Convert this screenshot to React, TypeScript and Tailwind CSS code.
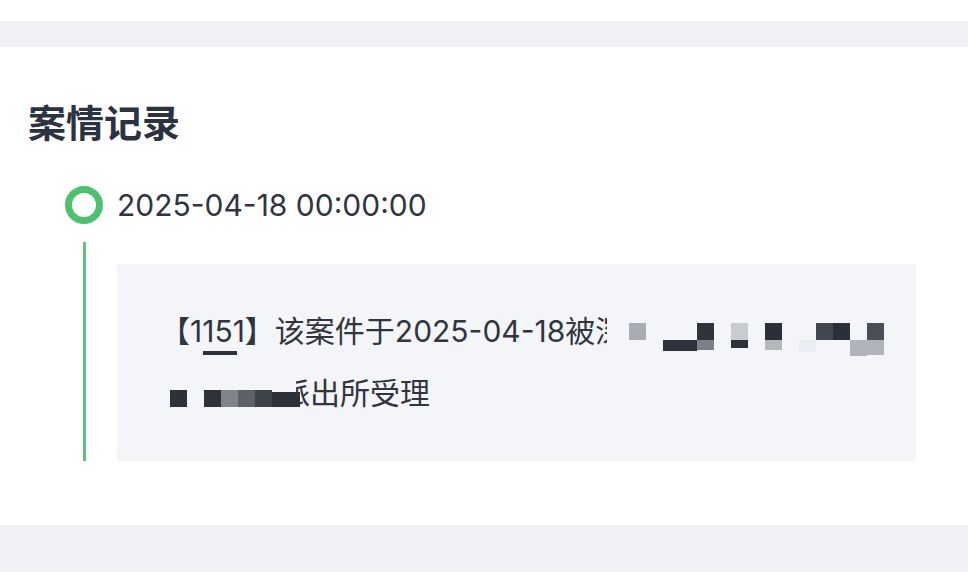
import React from "react";

const FONT = { fontFamily: '"Inter", "Noto Sans CJK SC", "Noto Sans", sans-serif' };

type B = [number, number, number, number, string];
const blocks: B[] = [
  [629, 323, 17, 17, "#a9adb3"],
  [663, 340, 34, 11, "#2d313a"],
  [697, 323, 17, 17, "#2f333c"],
  [697, 340, 17, 10, "#7c8088"],
  [731, 323, 17, 17, "#c8cbcf"],
  [731, 340, 17, 8, "#2e323b"],
  [765, 323, 17, 17, "#2b2f38"],
  [765, 340, 17, 10, "#b4b7bb"],
  [799, 340, 17, 12, "#eaedf3"],
  [816, 323, 17, 17, "#43474f"],
  [833, 323, 17, 17, "#2b2f38"],
  [850, 340, 17, 16, "#b0b3b9"],
  [867, 323, 17, 17, "#4a4e57"],
  [867, 340, 17, 15, "#b0b3b9"],
  [170, 390, 17, 17, "#2d313a"],
  [204, 390, 17, 17, "#2e323b"],
  [221, 390, 17, 17, "#80838a"],
  [238, 390, 17, 17, "#5e6168"],
  [255, 390, 17, 17, "#3e424b"],
  [272, 392, 28, 15, "#2d313a"],
  [203, 351, 34, 4, "#2d313a"],
];

export default function App() {
  return (
    <div className="w-[968px] h-[572px] bg-[#f0f1f4] overflow-hidden" style={FONT}>
      <div className="h-[21px] bg-white" />
      <div className="h-[26px] bg-[#f0f1f4]" />
      <div className="bg-white pt-[56px] pb-[64px]">
        <div className="pl-[28px] text-[38px] leading-[40px] font-semibold text-[#2c3340]">案情记录</div>
        <div className="mt-[43px] flex items-center pl-[65px] h-[38px]">
          <div className="w-[38px] h-[38px] rounded-full border-[7px] border-[#4cc26f]" />
          <div className="ml-[14px] text-[30px] leading-[38px] text-[#303540]">2025-04-18 00:00:00</div>
        </div>
        <div className="mt-[18px] flex">
          <div className="ml-[83px] w-[3px] bg-[#5cc37b]" />
          <div className="relative ml-[31px] mt-[22px] w-[799px] bg-[#f4f5f8] pl-[43px] pt-[36px] pb-[37px] text-[30px] leading-[62px] text-[#303540]">
            <div className="whitespace-nowrap">
              【1151】该案件于2025-04-18被
              <span className="inline-block w-[12px] overflow-hidden align-top">深</span>
            </div>
            <div className="whitespace-nowrap">
              <span className="inline-block w-[136px]" />
              <span className="inline-block w-[14px] overflow-hidden align-top">
                <span className="inline-block -ml-[16px]">派</span>
              </span>
              <span>出所受理</span>
            </div>
            {blocks.map(([x, y, w, h, c], i) => (
              <div
                key={i}
                className="absolute"
                style={{ left: x - 117, top: y - 264, width: w, height: h, background: c }}
              />
            ))}
          </div>
        </div>
      </div>
      <div className="h-[47px] bg-[#f0f1f4]" />
    </div>
  );
}
